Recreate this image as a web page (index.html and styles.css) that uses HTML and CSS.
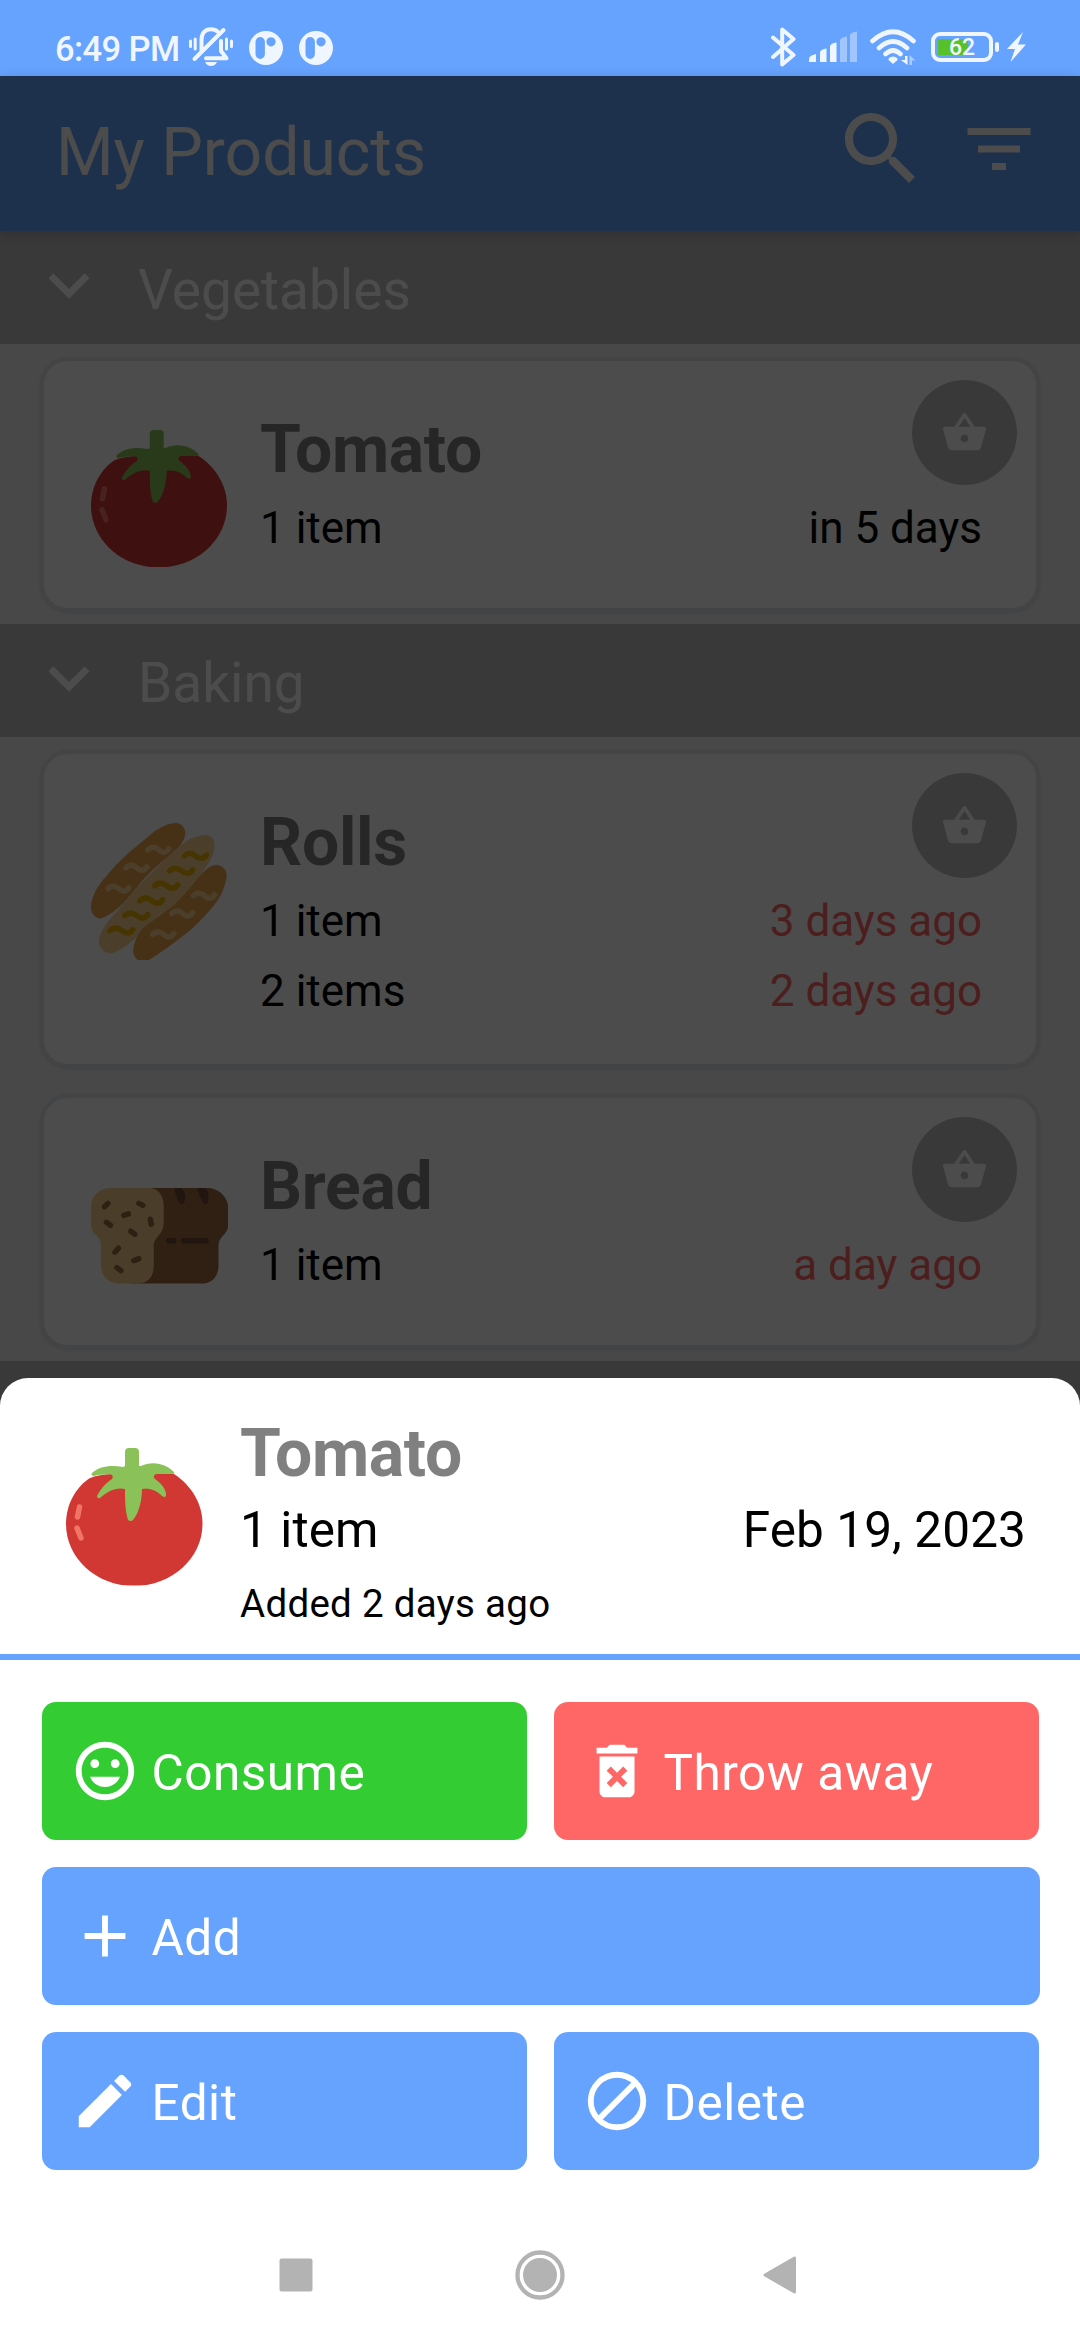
FILE: index.html
```html
<!DOCTYPE html>
<html lang="en">
<head>
<meta charset="utf-8">
<title>My Products</title>
<link rel="stylesheet" href="styles.css">
</head>
<body>
<svg class="defs" aria-hidden="true">
  <symbol id="tomato" viewBox="0 0 137.5 137.5">
    <path fill="#d13733" d="M24 30Q35 26 47 26H108C126 38 136.500 56 136.500 76C136.500 110 106 138 68 138C30 138 0 110 0 76C0 56 10 39 24 30Z"/>
    <path fill="#8ac159" d="M59 4Q59 0 63 0H69Q73 0 73 4V18L75 18C88 12 101 17 108 24Q109 26 106 26L90 26Q86 28 89 31C95 35 101 42 100 48Q99 50 96 48C90 42 84 40 76 41C76 52 73 65 67 72Q65 74 62 72C59 62 59 52 59 41C50 39 42 43 34 50Q31 51 31 48C35 40 40 35 46 31Q48 28 45 26.500C38 26 33 27 28 28Q24 27 26 25C34 18 45 17 57 19L59 18Z"/>
    <path stroke="#f07564" stroke-width="5.5" stroke-linecap="round" fill="none" d="M13.500 59L11.500 69M11 80L15 90"/>
  </symbol>
  <symbol id="rolls" viewBox="0 0 137.5 137.5">
    <path fill="#e9a44f" d="M57 14C68 4 78 0 86 0C93 1 96 8 94 14C92 20 88 26 81 31C66 42 53 55 40 72C32 82 20 93 9 96C3 95 0 90 0 83C1 73 7 62 15 54C28 37 42 26 57 14Z"/>
    <path fill="#fad092" d="M88 24C96 17 106 12 116 12C122 13 125 18 124 25C123 33 117 42 112 49C104 63 93 74 81 84C68 95 57 105 43 117C36 123 28 129 20 131C12 130 7 124 8 117C9 111 12 106 16 100C25 90 35 79 47 64C60 51 73 36 88 24Z"/>
    <path fill="#e9a44f" d="M112 50C117 45 122 42 127 42C134 44 137 49 136 55C134 66 130 75 123 83C115 93 108 100 98 109C85 119 71 130 58 137.500H47C42 134 41 127 44 120C46 113 50 107 55 103C64 97 72 91 81 84C94 73 102 61 112 50Z"/>
    <g fill="none" stroke-width="5.500" stroke-linecap="round">
      <path stroke="#ebb100" d="M94 33c4-4 8-3 11 0s8 4 11-1M79 48c4-4 8-3 12 0s8 4 11-1M64 63c4-4 8-3 12 0s8 4 11-1M49 78c4-4 8-3 12 0s8 4 11-1M34 93c4-4 8-3 12 0s8 4 11-1M19 108c4-4 8-3 12 0s8 4 11-1"/>
      <path stroke="#fad092" d="M57 27c4-4 8-3 11 0s7 4 10-1M35 45c4-4 8-3 11 0s7 4 10-1M17 66c4-4 8-3 11 0s7 4 10-1M103 73c4-4 8-3 11 0s7 4 10-1M81 91c4-4 8-3 11 0s7 4 10-1M62 112c4-4 8-3 11 0s7 4 10-1"/>
    </g>
  </symbol>
  <symbol id="bread" viewBox="0 -21 137.5 137.5">
    <path fill="#a06a42" d="M50 0H118C130 1 138 10 138 22V36C138 47 128 48 128 58V78C128 88 122 96 112 96H40Z"/>
    <path fill="#f8d18f" d="M20 0H58C68 0 73 8 73 18V35C73 47 63 49 63 58V78C63 88 58 96 47 96H27C16 95 10 87 10 78V58C10 46 0 49 0 36V20C0 8 8 0 20 0Z"/>
    <path fill="#6e4632" d="M84 0H91C96 6 95 12 93 15Q91 18 88 14C86 9 84 5 84 0ZM107 0H115C119 4 118 12 117 15Q114 18 112 14C110 9 107 5 107 0Z"/>
    <g fill="none" stroke-width="5.500" stroke-linecap="round">
      <path stroke="#6e4632" d="M78 53H83M93 53H115.500"/>
      <path stroke="#a06a42" d="M13.500 19L17 15.500M48 15.500L52 17.500M33 27.500L37.500 26M15.500 34.500L19.500 37.500M59.500 31.500L60.500 36.500M40 43.500L44 46.500M24 64.500L27.500 60.500M43 73L48 71M26 80L30 83"/>
    </g>
  </symbol>
  <symbol id="chevron" viewBox="0 0 24 24"><path d="M16.590 8.590L12 13.170 7.410 8.590 6 10l6 6 6-6z"/></symbol>
  <symbol id="basket" viewBox="0 0 24 24"><path d="M17.210 9l-4.380-6.560c-.19-.28-.51-.42-.83-.42s-.64.14-.83.43L6.790 9H2c-.55 0-1 .45-1 1 0 .09.01.18.04.27l2.540 9.270c.23.84 1 1.460 1.920 1.460h13c.92 0 1.690-.62 1.930-1.460l2.540-9.270L23 10c0-.55-.45-1-1-1h-4.790zM9 9l3-4.400L15 9H9zm3 8c-1.100 0-2-.9-2-2s.9-2 2-2 2 .9 2 2-.9 2-2 2z"/></symbol>
  <symbol id="app" viewBox="0 0 34 34"><path fill-rule="evenodd" d="M17 0A17 17 0 1 1 17 34A17 17 0 1 1 17 0ZM6.500 11V23a4.700 5 0 0 0 9.400 0V11a4.700 5 0 0 0-9.400 0ZM22 6.200a4.600 4.600 0 1 0 .01 0Z"/></symbol>
</svg>

<div class="screen">
  <header class="status">
    <span class="time">6:49 PM</span>
    <svg class="bell" viewBox="0 0 44 40" width="44" height="40">
      <g fill="none" stroke="currentColor" stroke-linecap="round">
        <path stroke-width="3" d="M1.500 14V19.500M6.200 12V22M42.500 14V19.500M37.500 12V22"/>
        <path stroke-width="4" d="M12.500 24V13C12.500 6 16 2.200 22 2.200C25 2.200 27 3 28.500 4.500"/>
        <path stroke-width="4" stroke-linejoin="round" d="M32 14V24L37.500 31.300H17"/>
        <path stroke-width="4" d="M34.500 3L5.500 32"/>
      </g>
      <path fill="currentColor" d="M16 35H28Q26 39 22 39Q18 39 16 35Z"/>
    </svg>
    <svg class="notif" width="34" height="34"><use href="#app"/></svg>
    <svg class="notif" width="34" height="34"><use href="#app"/></svg>
    <div class="status-right">
      <svg width="25" height="40" viewBox="0 0 25 40"><path fill="none" stroke="currentColor" stroke-width="4" stroke-linejoin="round" stroke-linecap="round" d="M2 10.500L22.500 28L11.200 37.500V2.500L22.500 12L2 30"/></svg>
      <svg class="signal" width="48" height="32" viewBox="0 0 48 32"><path d="M0 31V28Q0 24.500 7 23V31ZM11 31V21Q12 18 17.500 17.500V31ZM21 31V15Q22 12 27.500 11.500V31Z"/><path opacity=".42" d="M31 31V9Q32 6 38 5.500V31ZM41 31V4Q42 1 48 .5V31Z"/></svg>
      <svg class="wifi" width="46" height="36" viewBox="0 0 46 36">
        <path fill="none" stroke="currentColor" stroke-width="4.600" stroke-linecap="round" d="M2.500 12Q23-6.500 43.500 12M9 19Q23 6 37 19M15.500 25Q23 18 30.500 25"/>
        <path d="M18.500 31Q18 28 23 27.500Q28 28 27.500 31L23 35Z"/><path d="M35 27H37.500V36L31 31H35Z"/><path opacity=".5" d="M39.500 36V26L45.500 31.500H42V36Z"/>
      </svg>
      <div class="battery"><span>62</span></div>
      <svg class="bolt" width="19" height="30" viewBox="0 0 19 30"><path d="M16 0L0 17H8L3.500 30L19 12.500H11Z"/></svg>
    </div>
  </header>

  <main class="content">
    <div class="appbar">
      <h1>My Products</h1>
      <svg class="search" viewBox="0 0 24 24"><path d="M15.500 14h-.79l-.28-.27C15.410 12.590 16 11.110 16 9.500 16 5.910 13.090 3 9.500 3S3 5.910 3 9.500 5.910 16 9.500 16c1.610 0 3.090-.59 4.230-1.570l.27.28v.79l5 4.990L20.490 19l-4.990-5zm-6 0C7.010 14 5 11.990 5 9.500S7.010 5 9.500 5 14 7.010 14 9.500 11.990 14 9.500 14z"/></svg>
      <svg class="filter" viewBox="0 0 24 24"><path d="M10 18h4v-2h-4v2zM3 6v2h18V6H3zm3 7h12v-2H6v2z"/></svg>
    </div>

    <div class="section"><svg><use href="#chevron"/></svg><h2>Vegetables</h2></div>
    <div class="list">
      <article class="card">
        <svg class="food"><use href="#tomato"/></svg>
        <div class="info"><h3>Tomato</h3>
          <div class="row"><span>1 item</span><span>in 5 days</span></div>
        </div>
        <div class="cart"><svg><use href="#basket"/></svg></div>
      </article>
    </div>

    <div class="section"><svg><use href="#chevron"/></svg><h2>Baking</h2></div>
    <div class="list">
      <article class="card tall">
        <svg class="food"><use href="#rolls"/></svg>
        <div class="info"><h3>Rolls</h3>
          <div class="row"><span>1 item</span><span class="late">3 days ago</span></div>
          <div class="row"><span>2 items</span><span class="late">2 days ago</span></div>
        </div>
        <div class="cart"><svg><use href="#basket"/></svg></div>
      </article>
      <article class="card">
        <svg class="food"><use href="#bread"/></svg>
        <div class="info"><h3>Bread</h3>
          <div class="row"><span>1 item</span><span class="late">a day ago</span></div>
        </div>
        <div class="cart"><svg><use href="#basket"/></svg></div>
      </article>
    </div>
    <div class="section"></div>
    <div class="scrim"></div>
  </main>

  <section class="sheet">
    <div class="summary">
      <svg class="food"><use href="#tomato"/></svg>
      <div class="detail">
        <h3>Tomato</h3>
        <div class="row"><span>1 item</span><span>Feb 19, 2023</span></div>
        <p>Added 2 days ago</p>
      </div>
    </div>
    <div class="actions">
      <div class="btn consume"><svg viewBox="0 0 24 24"><path d="M11.990 2C6.470 2 2 6.480 2 12s4.470 10 9.990 10C17.520 22 22 17.520 22 12S17.520 2 11.990 2zM12 20c-4.420 0-8-3.580-8-8s3.580-8 8-8 8 3.580 8 8-3.580 8-8 8zm3.500-9c.83 0 1.500-.67 1.500-1.500S16.330 8 15.500 8 14 8.670 14 9.500s.67 1.500 1.500 1.500zm-7 0c.83 0 1.500-.67 1.500-1.500S9.330 8 8.500 8 7 8.670 7 9.500 7.670 11 8.500 11zm3.500 6.500c2.330 0 4.310-1.460 5.110-3.500H6.890c.8 2.040 2.780 3.500 5.110 3.500z"/></svg><span>Consume</span></div>
      <div class="btn throw"><svg viewBox="0 0 24 24"><path d="M6 19c0 1.100.9 2 2 2h8c1.100 0 2-.9 2-2V7H6v12zm2.460-7.120l1.410-1.410L12 12.590l2.120-2.120 1.410 1.410L13.410 14l2.120 2.120-1.410 1.410L12 15.410l-2.120 2.120-1.410-1.410L10.590 14l-2.130-2.120zM15.500 4l-1-1h-5l-1 1H5v2h14V4z"/></svg><span>Throw away</span></div>
      <div class="btn wide"><svg viewBox="0 0 24 24"><path d="M19 13h-6v6h-2v-6H5v-2h6V5h2v6h6v2z"/></svg><span>Add</span></div>
      <div class="btn"><svg viewBox="0 0 24 24"><path d="M3 17.250V21h3.750L17.810 9.940l-3.750-3.750L3 17.250zM20.710 7.040c.39-.39.39-1.020 0-1.410l-2.340-2.340c-.39-.39-1.020-.39-1.410 0l-1.830 1.830 3.750 3.750 1.830-1.830z"/></svg><span>Edit</span></div>
      <div class="btn"><svg viewBox="0 0 24 24"><g fill="none" stroke="currentColor" stroke-width="2"><circle cx="12" cy="12" r="9"/><path d="M5.600 18.400L18.400 5.600"/></g></svg><span>Delete</span></div>
    </div>
    <nav class="nav">
      <svg width="34" height="34" viewBox="0 0 34 34"><rect x=".5" y=".5" width="33" height="33" rx="2"/></svg>
      <svg width="50" height="50" viewBox="0 0 50 50"><circle cx="25" cy="25" r="17"/><circle cx="25" cy="25" r="22.500" fill="none" stroke="currentColor" stroke-width="4.300"/></svg>
      <svg width="34" height="38" viewBox="0 0 34 38"><path stroke="currentColor" stroke-width="3" stroke-linejoin="round" d="M2 19L31.500 2V36Z"/></svg>
    </nav>
  </section>
</div>
</body>
</html>
```
FILE: styles.css
```css
* { box-sizing: border-box; margin: 0; padding: 0; }
body { font-family: Roboto, "Noto Sans", sans-serif; color: #000; background: #fff; }
svg { display: block; flex: none; fill: currentColor; }
h1, h2 { font-weight: 400; }
.defs { position: absolute; width: 0; height: 0; }
.screen { position: relative; width: 1080px; height: 2340px; overflow: hidden; display: flex; flex-direction: column; }

.status { height: 76px; flex: none; display: flex; align-items: center; background: #66a3ff; color: #f0f6ff; padding: 18px 54px 0 55px; }
.time { font-size: 34.500px; font-weight: 500; letter-spacing: -.6px; line-height: 40px; width: 134px; white-space: nowrap; padding-top: 3px; }
.bell { margin-right: 16px; }
.notif { margin: 1px 16px 0 0; }
.status-right { margin-left: auto; display: flex; align-items: center; }
.signal { margin-left: 13px; }
.wifi { margin-left: 13px; }
.battery { position: relative; margin-left: 15px; width: 62px; height: 30px; border: 4px solid #f0f6ff; border-radius: 9px; background: linear-gradient(#57c12b, #57c12b) 3px 3px / 30px 16px no-repeat; font-size: 23px; font-weight: 500; line-height: 23px; text-align: center; }
.battery::after { content: ""; position: absolute; left: 60px; top: 6px; width: 4px; height: 10px; border-radius: 2px; background: #f0f6ff; }
.bolt { margin-left: 14px; }

.content { position: relative; flex: 1; background: #f2f2f2; }
.scrim { position: absolute; inset: 0; background: rgba(0, 0, 0, .7); z-index: 2; }
.appbar { position: relative; height: 155px; display: flex; align-items: center; background: #66a3ff; color: #fff; padding: 0 39px 9px 56px; box-shadow: 0 3px 12px rgba(0, 0, 0, .22); }
.appbar h1 { flex: 1; font-size: 66px; line-height: 78px; padding-top: 8px; }
.search { width: 96px; height: 96px; margin-right: 28px; }
.filter { width: 84px; height: 84px; }

.section { height: 113px; display: flex; align-items: center; background: #c0c0c0; color: #fff; padding-left: 28px; }
.section svg { width: 82px; height: 82px; margin: 0 28px 5px 0; }
.section h2 { font-size: 55px; line-height: 65px; padding-top: 5px; }
.list { display: flex; flex-direction: column; gap: 26px; padding: 13px 40px 12px; }
.card { position: relative; height: 255px; display: flex; border: 4px solid #dfe3e7; border-radius: 28px; background: #fff; padding: 46px 54px 0 47px; box-shadow: 0 1px 3px rgba(0, 0, 0, .12); }
.card.tall { height: 318px; }
.food { width: 137px; height: 137px; }
.card .food { margin: 23px 32px 0 0; }
.info, .detail { flex: 1; }
h3 { font-size: 66px; line-height: 86px; font-weight: 700; letter-spacing: -.3px; color: #808080; }
.row { display: flex; justify-content: space-between; font-size: 44px; line-height: 70px; }
.late { color: #ff6666; }
.cart { position: absolute; top: 19px; right: 19px; width: 105px; height: 105px; border-radius: 50%; background: #c0c0c0; color: #fff; display: grid; place-items: center; }
.cart svg { width: 47px; height: 47px; }

.sheet { position: absolute; left: 0; right: 0; bottom: 0; height: 962px; z-index: 3; display: flex; flex-direction: column; background: #fff; border-radius: 28px 28px 0 0; }
.summary { height: 282px; display: flex; border-bottom: 6px solid #66a3ff; padding: 33px 54px 0 66px; }
.summary .food { width: 137.5px; height: 137.5px; margin: 37px 36.500px 0 0; }
.detail h3 { line-height: 85px; }
.detail .row { font-size: 49.500px; letter-spacing: .1px; line-height: 69px; }
.detail p { font-size: 38.500px; letter-spacing: .28px; line-height: 77px; }
.actions { display: grid; grid-template-columns: 485px 485px; gap: 27px; padding: 42px 41px 0 42px; }
.btn { height: 138px; display: flex; align-items: center; gap: 12px; padding-left: 27.500px; border-radius: 14px; background: #66a3ff; color: #fff; font-size: 49.500px; letter-spacing: .5px; }
.btn svg { width: 70px; height: 70px; }
.btn span { padding-top: 4px; }
.wide { grid-column: 1 / -1; margin-right: -1px; }
.consume { background: #33cc33; }
.throw { background: #ff6666; }
.nav { margin-top: auto; height: 130px; display: flex; align-items: center; color: #b3b3b3; padding-left: 279px; }
.nav svg + svg { margin-left: 202px; }
.nav svg:last-child { margin-left: 198px; }
```
